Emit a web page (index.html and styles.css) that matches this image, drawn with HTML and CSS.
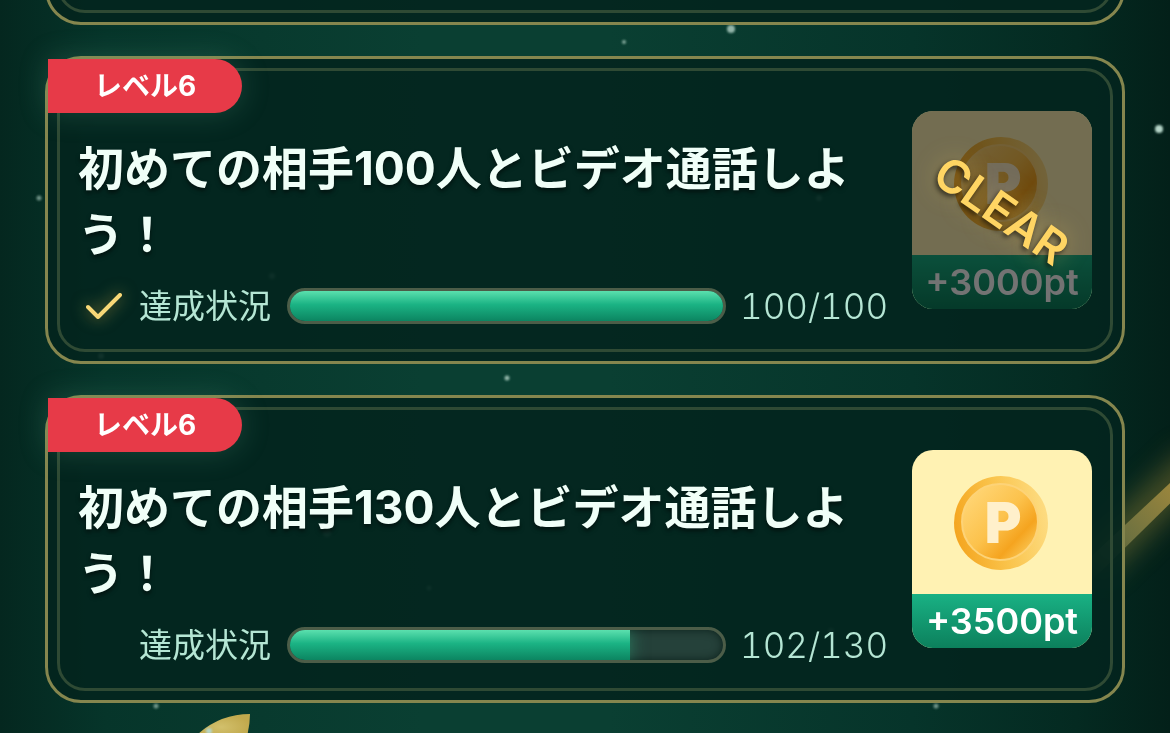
FILE: index.html
```html
<!DOCTYPE html>
<html lang="ja">
<head>
<meta charset="utf-8">
<meta name="viewport" content="width=device-width, initial-scale=1">
<title>ミッション</title>
<link rel="stylesheet" href="styles.css">
</head>
<body>
<svg class="backdrop" viewBox="0 0 1170 733" preserveAspectRatio="xMidYMid slice" aria-hidden="true">
  <defs>
    <filter id="soft" x="-50%" y="-50%" width="200%" height="200%"><feGaussianBlur stdDeviation="1"/></filter>
    <filter id="haze" x="-50%" y="-50%" width="200%" height="200%"><feGaussianBlur stdDeviation="14"/></filter>
    <linearGradient id="beam" gradientUnits="userSpaceOnUse" x1="1190" y1="480" x2="1085" y2="575">
      <stop offset="0" stop-color="#a68b3c"/><stop offset=".6" stop-color="#6d7140"/><stop offset="1" stop-color="#6d7140" stop-opacity="0"/>
    </linearGradient>
    <radialGradient id="petal"><stop offset="0" stop-color="#d2c06c"/><stop offset="1" stop-color="#c1a94d"/></radialGradient>
  </defs>
  <path d="M1200 460 1090 566" stroke="#8a7a30" stroke-width="36" opacity=".5" filter="url(#haze)"/>
  <path d="M1200 455 1080 567 1080 592 1200 474Z" fill="url(#beam)"/>
  <path d="M192 740Q216 714 250 714Q250 726 246 740Z" fill="url(#petal)"/>
  <g fill="#b5d5c8" filter="url(#soft)">
    <circle cx="731" cy="29" r="4" opacity=".8"/>
    <circle cx="624" cy="42" r="2" opacity=".7"/>
    <circle cx="1159" cy="129" r="4"/>
    <circle cx="39" cy="198" r="2.5" opacity=".6"/>
    <circle cx="507" cy="378" r="2.5" opacity=".8"/>
    <circle cx="156" cy="706" r="2.5" opacity=".6"/>
    <circle cx="936" cy="706" r="2.5" opacity=".6"/>
    <circle cx="101" cy="356" r="3" opacity=".7"/>
    <circle cx="272" cy="276" r="3" opacity=".5"/>
    <circle cx="819" cy="198" r="3" opacity=".5"/>
    <circle cx="327" cy="533" r="4" opacity=".5"/>
    <circle cx="429" cy="588" r="2.5" opacity=".5"/>
    <circle cx="831" cy="631" r="3" opacity=".4"/>
    <circle cx="209" cy="731" r="3"/>
  </g>
</svg>

<main class="missions">
  <div class="card card-previous"></div>

  <article class="card">
    <span class="level">レベル6</span>
    <div class="detail">
      <h2 class="title">初めての相手100人とビデオ通話しよう！</h2>
      <div class="status">
        <span class="check">
          <svg viewBox="0 0 50 36" aria-label="達成"><path d="M10 19 20 29 42 7" fill="none" stroke="#f8d877" stroke-width="4" stroke-linecap="round" stroke-linejoin="round"/></svg>
        </span>
        <span class="label" id="p1">達成状況</span>
        <div class="bar" role="progressbar" aria-labelledby="p1" aria-valuemin="0" aria-valuemax="100" aria-valuenow="100"><div class="fill" style="width:100%"></div></div>
        <span class="count">100/100</span>
      </div>
    </div>
    <div class="reward">
      <div class="prize">
        <svg class="coin" viewBox="0 0 96 96" aria-hidden="true">
          <defs>
            <linearGradient id="rim" x1="0" y1=".6" x2="1" y2=".4"><stop offset="0" stop-color="#f4a51f"/><stop offset=".5" stop-color="#fac44c"/><stop offset="1" stop-color="#fddc82"/></linearGradient>
            <linearGradient id="face" x1=".1" y1=".1" x2=".9" y2=".85"><stop offset="0" stop-color="#ffd676"/><stop offset=".5" stop-color="#fcc24c"/><stop offset=".8" stop-color="#f5a41f"/><stop offset="1" stop-color="#fac34e"/></linearGradient>
          </defs>
          <circle cx="48" cy="49" r="47" fill="url(#rim)"/>
          <circle cx="47" cy="48" r="38" fill="url(#face)" stroke="#fdd377" stroke-width="2"/>
          <text class="coin-letter" x="50" y="69" text-anchor="middle">P</text>
        </svg>
      </div>
      <div class="points">+3000pt</div>
      <div class="cleared"><span class="cleared-text">CLEAR</span></div>
    </div>
  </article>

  <article class="card">
    <span class="level">レベル6</span>
    <div class="detail">
      <h2 class="title">初めての相手130人とビデオ通話しよう！</h2>
      <div class="status">
        <span class="check"></span>
        <span class="label" id="p2">達成状況</span>
        <div class="bar" role="progressbar" aria-labelledby="p2" aria-valuemin="0" aria-valuemax="130" aria-valuenow="102"><div class="fill" style="width:78.46%"></div></div>
        <span class="count">102/130</span>
      </div>
    </div>
    <div class="reward">
      <div class="prize">
        <svg class="coin" viewBox="0 0 96 96" aria-hidden="true">
          <circle cx="48" cy="49" r="47" fill="url(#rim)"/>
          <circle cx="47" cy="48" r="38" fill="url(#face)" stroke="#fdd377" stroke-width="2"/>
          <text class="coin-letter" x="50" y="69" text-anchor="middle">P</text>
        </svg>
      </div>
      <div class="points">+3500pt</div>
    </div>
  </article>
</main>
</body>
</html>
```

FILE: styles.css
```css
* {
  box-sizing: border-box;
}

html {
  background: #0a3e31;
}

body {
  margin: 0;
  min-height: 100vh;
  overflow: hidden;
  position: relative;
  font-family: "Inter", "Noto Sans CJK JP", sans-serif;
  color: #f0fff8;
  background:
    linear-gradient(90deg, #04271f 0%, #06352a 9%, #0a3f32 36%, #0a3f32 52%, #06342a 78%, #042a21 92%, #032019 100%);
}

.backdrop {
  position: absolute;
  inset: 0;
  width: 100%;
  height: 100%;
}

.missions {
  position: relative;
  display: flex;
  flex-direction: column;
  gap: 31px;
  padding: 0 45px;
}

.card {
  position: relative;
  display: flex;
  align-items: center;
  gap: 24px;
  padding: 0 30px;
  border: 3px solid #85864e;
  border-radius: 36px;
  background: rgba(3, 37, 30, 0.9);
}

.card::before {
  content: "";
  position: absolute;
  inset: 9px;
  border: 3px solid #2f4a34;
  border-radius: 28px;
}

.card-previous {
  height: 120px;
  margin-top: -95px;
}

.level {
  position: absolute;
  top: 0;
  left: 0;
  padding: 0 46px;
  border-radius: 0 27px 27px 0;
  background: #e73a48;
  box-shadow: 0 0 30px rgba(120, 190, 160, 0.22);
  color: #fff;
  font-size: 28px;
  font-weight: 700;
  line-height: 54px;
}

.detail {
  position: relative;
  flex: 1;
  min-width: 0;
  padding: 76px 0 37px;
}

.title {
  margin: 0 0 21px;
  font-size: 46px;
  font-weight: 700;
  line-height: 66px;
  text-shadow: 0 3px 4px rgba(0, 0, 0, 0.5);
}

.status {
  display: flex;
  align-items: center;
  height: 36px;
  color: #b5e6d4;
  white-space: nowrap;
}

.check {
  width: 50px;
  height: 36px;
  margin-right: 11px;
  filter: drop-shadow(0 0 8px rgba(248, 200, 80, 0.6));
}

.check svg {
  display: block;
}

.label {
  margin-right: 16px;
  font-size: 33px;
  line-height: 36px;
}

.bar {
  position: relative;
  flex: 1;
  height: 36px;
  overflow: hidden;
  border: 3px solid #4c5d48;
  border-radius: 18px;
  background: #25413a;
  box-shadow: inset 0 0 9px rgba(0, 20, 15, 0.7);
}

.fill {
  height: 100%;
  background: linear-gradient(#5be0ae 0%, #1bb384 45%, #0c8561 100%);
  box-shadow: 0 0 18px rgba(50, 190, 140, 0.5);
}

.count {
  width: 162px;
  padding-left: 14px;
  font-size: 35px;
  font-weight: 300;
  font-variant-numeric: tabular-nums;
  line-height: 36px;
}

.reward {
  position: relative;
  width: 180px;
  overflow: hidden;
  border-radius: 21px;
  background: #fff2b3;
}

.prize {
  display: flex;
  align-items: center;
  justify-content: center;
  height: 144px;
}

.coin {
  width: 96px;
  height: 96px;
  margin-left: -2px;
}

.coin-letter {
  fill: #fff0cb;
  font-family: "Inter", sans-serif;
  font-size: 56px;
  font-weight: 900;
}

.points {
  background: linear-gradient(#19b184, #0c805c);
  color: #fff;
  font-size: 36px;
  font-weight: 600;
  line-height: 54px;
  text-align: center;
}

.cleared {
  position: absolute;
  inset: 0;
  display: flex;
  align-items: center;
  justify-content: center;
  background: rgba(0, 0, 0, 0.55);
}

.cleared-text {
  transform: rotate(35deg);
  color: #ffd563;
  font-size: 46px;
  font-weight: 600;
  text-shadow: 0 3px 5px rgba(0, 0, 0, 0.6), 0 0 24px rgba(255, 213, 99, 0.4);
}
```
